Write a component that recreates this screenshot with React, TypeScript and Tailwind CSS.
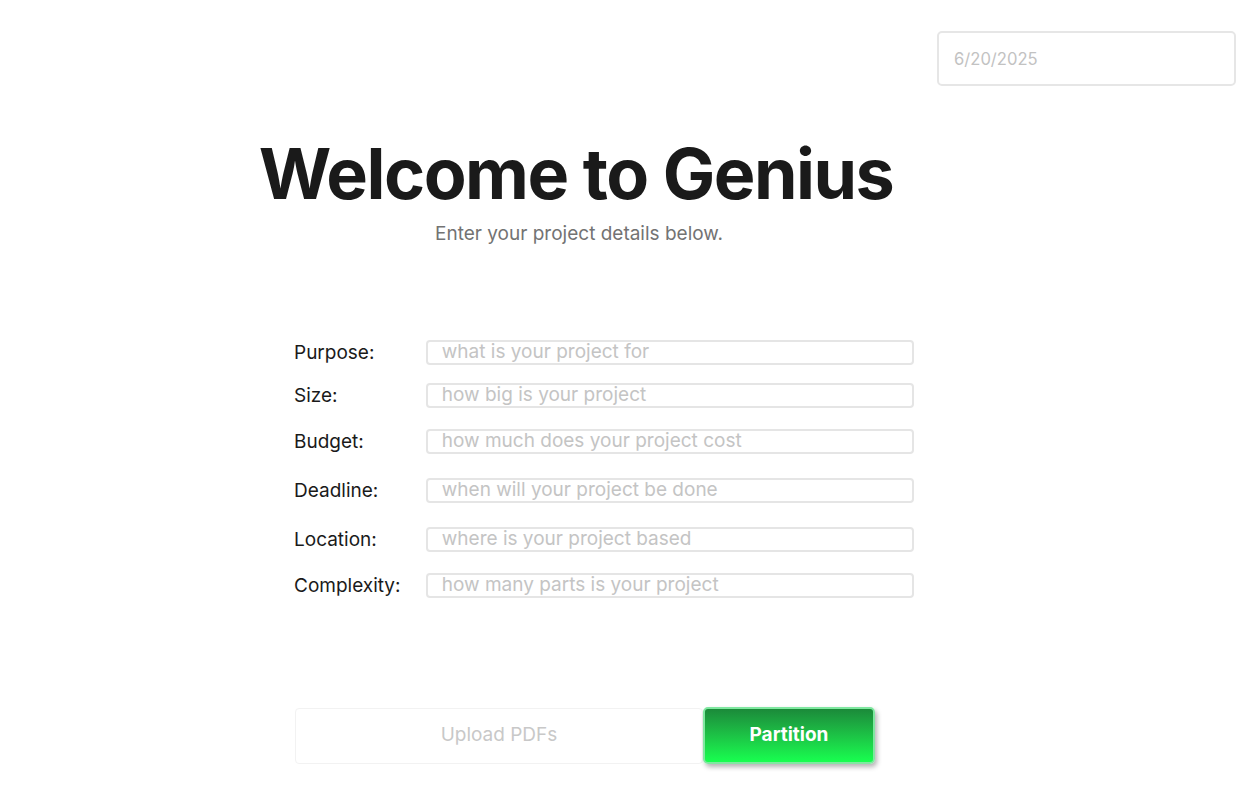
import React from "react";

const FIELDS = [
    { label: "Purpose:", placeholder: "what is your project for", mt: "mt-0" },
    { label: "Size:", placeholder: "how big is your project", mt: "mt-[18px]" },
    { label: "Budget:", placeholder: "how much does your project cost", mt: "mt-[21px]" },
    { label: "Deadline:", placeholder: "when will your project be done", mt: "mt-[24px]" },
    { label: "Location:", placeholder: "where is your project based", mt: "mt-[24px]" },
    { label: "Complexity:", placeholder: "how many parts is your project", mt: "mt-[21px]" },
];

const App: React.FC = () => {
    return (
        <div
            className="min-h-[812px] w-full bg-white text-[#1a1a1a]"
            style={{ fontFamily: "Inter, 'Noto Sans', sans-serif" }}
        >
            <div className="flex justify-end pt-[31px] pr-[24px]">
                <input
                    type="text"
                    placeholder="6/20/2025"
                    className="h-[55px] w-[299px] rounded-[5px] border-2 border-[#e6e6e6] px-[15px] text-[16.6px] placeholder:text-[#c2c2c2] outline-none"
                />
            </div>

            <div className="ml-[260px] w-[632px] pt-[50px] flex flex-col items-center">
                <h1 className="whitespace-nowrap text-[70px] font-bold leading-[76px] tracking-[-1.5px] text-[#1a1a1a]">
                    Welcome to Genius
                </h1>
                <p className="mt-[8px] ml-[6px] text-[19px] text-[#737373]">Enter your project details below.</p>
            </div>

            <form className="ml-[294px] mt-[91px] w-[620px] flex flex-col">
                {FIELDS.map((f) => (
                    <div key={f.label} className={`flex items-center ${f.mt}`}>
                        <label className="w-[132px] text-[19px] leading-[25px] text-[#1a1a1a]">{f.label}</label>
                        <input
                            type="text"
                            placeholder={f.placeholder}
                            className="h-[25px] w-[489px] rounded-[4px] border-2 border-[#e5e5e5] px-[14px] text-[19px] placeholder:text-[#c4c4c4] outline-none"
                        />
                    </div>
                ))}
            </form>

            <div className="ml-[295px] mt-[110px] flex items-stretch">
                <button className="h-[56px] w-[408px] rounded-[4px] border border-[#f2f2f2] text-[19px] text-[#c8c8c8]">
                    Upload PDFs
                </button>
                <button className="h-[57px] w-[172px] -mt-[1px] rounded-[5px] border-2 border-[#7fe8a0] bg-gradient-to-b from-[#1b8a3a] to-[#17ff4f] text-[19px] font-bold text-white shadow-[2px_3px_5px_rgba(0,0,0,0.3)]">
                    Partition
                </button>
            </div>
        </div>
    );
};

export default App;
